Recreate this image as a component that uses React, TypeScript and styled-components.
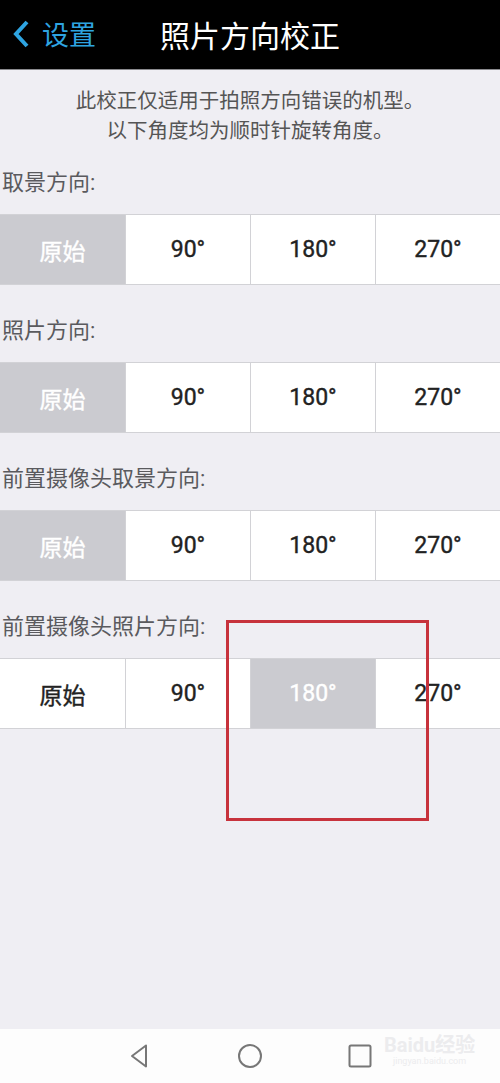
import React from "react";
import styled, { createGlobalStyle } from "styled-components";

const GlobalStyle = createGlobalStyle`
  html, body {
    margin: 0;
    padding: 0;
    background: #efeef3;
  }
  * {
    box-sizing: border-box;
  }
`;

const FONT = `Roboto, "Noto Sans CJK SC", "Noto Sans", sans-serif`;

const Screen = styled.div`
  position: relative;
  width: 500px;
  height: 1083px;
  display: flex;
  flex-direction: column;
  background: #efeef3;
  font-family: ${FONT};
  overflow: hidden;
`;

const Header = styled.header`
  position: relative;
  height: 70px;
  background: #000;
  border-bottom: 1px solid #8a8a8e;
  display: flex;
  align-items: center;
  justify-content: center;
  flex-shrink: 0;
`;

const Back = styled.div`
  position: absolute;
  left: 11px;
  top: 0;
  bottom: 0;
  display: flex;
  align-items: center;
  gap: 11px;
  color: #2ea4e1;
  font-size: 27px;
  padding-bottom: 2px;
`;

const Title = styled.h1`
  margin: 0;
  color: #fff;
  font-size: 30px;
  font-weight: 400;
  padding-bottom: 2px;
`;

const Content = styled.main`
  flex: 1;
`;

const Notice = styled.p`
  margin: 0;
  padding: 16px 0 0;
  text-align: center;
  font-size: 20.5px;
  line-height: 30px;
  color: #555;
`;

const Section = styled.section`
  margin-bottom: 9px;
`;

const Label = styled.div`
  padding: 22px 0 16px 2px;
  font-size: 22px;
  line-height: 30px;
  color: #5a5a5e;
`;

const Segments = styled.div`
  display: grid;
  grid-template-columns: repeat(4, 1fr);
  height: 71px;
  border-top: 1px solid #d2d2d6;
  border-bottom: 1px solid #d2d2d6;
  background: #fff;
`;

const Cell = styled.div<{ $active?: boolean }>`
  display: flex;
  align-items: center;
  justify-content: center;
  font-size: 23px;
  font-weight: 400;
  -webkit-text-stroke: 0.4px ${({ $active }) => ($active ? "#fff" : "#222")};
  color: ${({ $active }) => ($active ? "#fff" : "#222")};
  background: ${({ $active }) => ($active ? "#cbcbd0" : "#fff")};
  & + & {
    border-left: 1px solid #d2d2d6;
  }
`;

const Mark = styled.div`
  position: absolute;
  left: 226px;
  top: 620px;
  width: 203px;
  height: 201px;
  border: 3px solid #c7323c;
`;

const NavBar = styled.nav`
  position: relative;
  height: 54px;
  background: #fdfdfd;
  display: flex;
  justify-content: center;
  align-items: center;
  gap: 84px;
  flex-shrink: 0;
`;

const NavIcon = styled.svg`
  width: 26px;
  height: 26px;
  stroke: #777;
  stroke-width: 2;
  fill: none;
`;

const Watermark = styled.div`
  position: absolute;
  left: 384px;
  top: 6px;
  display: flex;
  flex-direction: column;
  align-items: center;
  color: #ececee;
  font-size: 20px;
  font-weight: 700;
  line-height: 20px;
  small {
    font-size: 9px;
    line-height: 12px;
    font-weight: 400;
  }
`;

const OPTIONS = ["原始", "90°", "180°", "270°"];

const SECTIONS = [
  { label: "取景方向:", active: 0 },
  { label: "照片方向:", active: 0 },
  { label: "前置摄像头取景方向:", active: 0 },
  { label: "前置摄像头照片方向:", active: 2 },
];

export default function App() {
  return (
    <Screen>
      <GlobalStyle />
      <Header>
        <Back>
          <svg width="20" height="30" viewBox="0 0 20 30">
            <path d="M16 3 L5 15 L16 27" stroke="#2ea4e1" strokeWidth="4" fill="none" />
          </svg>
          设置
        </Back>
        <Title>照片方向校正</Title>
      </Header>
      <Content>
        <Notice>
          此校正仅适用于拍照方向错误的机型。
          <br />
          以下角度均为顺时针旋转角度。
        </Notice>
        {SECTIONS.map((s) => (
          <Section key={s.label}>
            <Label>{s.label}</Label>
            <Segments>
              {OPTIONS.map((o, i) => (
                <Cell key={o} $active={i === s.active}>
                  {o}
                </Cell>
              ))}
            </Segments>
          </Section>
        ))}
      </Content>
      <NavBar>
        <NavIcon viewBox="0 0 26 26">
          <path d="M19 2.5 L5 13 L19 23.5 Z" strokeLinejoin="round" />
        </NavIcon>
        <NavIcon viewBox="0 0 26 26">
          <circle cx="13" cy="13" r="11" />
        </NavIcon>
        <NavIcon viewBox="0 0 26 26">
          <rect x="2.5" y="2.5" width="21" height="21" rx="1.5" />
        </NavIcon>
        <Watermark>
          Baidu经验
          <small>jingyan.baidu.com</small>
        </Watermark>
      </NavBar>
      <Mark />
    </Screen>
  );
}
